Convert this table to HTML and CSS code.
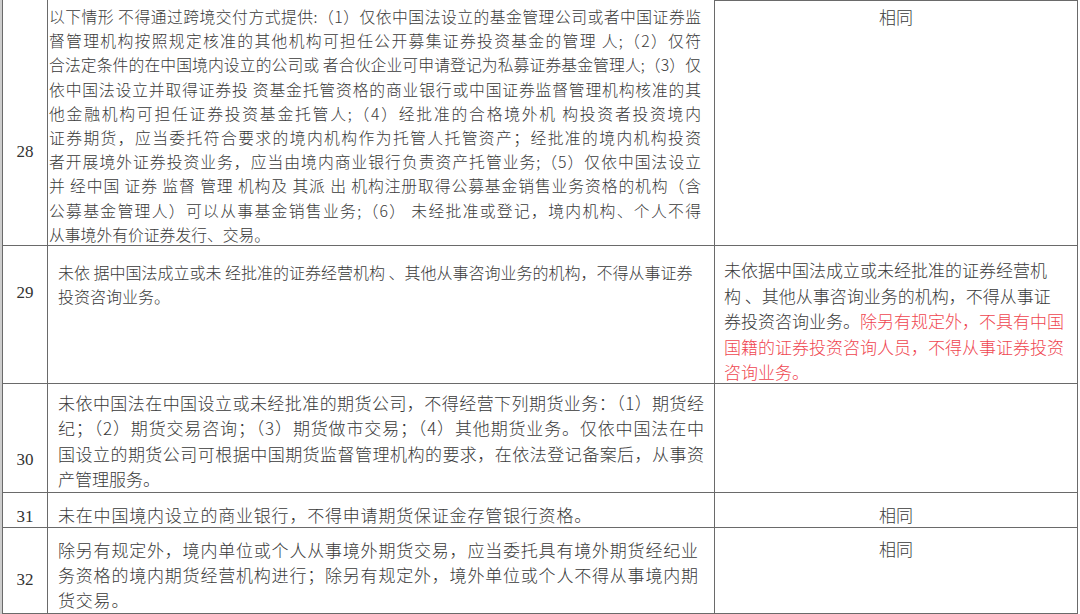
FILE: index.html
```html
<!DOCTYPE html>
<html lang="zh-CN">
<head>
<meta charset="utf-8">
<title>对比表</title>
<link rel="stylesheet" href="styles.css">
</head>
<body>
<div class="page">
  <div class="grid">
    <!-- 28 -->
    <div class="cell num n28">28</div>
    <div class="cell body r28">
      <span class="ln">以下情形 不得通过跨境交付方式提供:（1）仅依中国法设立的基金管理公司或者中国证券监</span>
      <span class="ln">督管理机构按照规定核准的其他机构可担任公开募集证券投资基金的管理 人;（2）仅符</span>
      <span class="ln">合法定条件的在中国境内设立的公司或 者合伙企业可申请登记为私募证券基金管理人;（3）仅</span>
      <span class="ln">依中国法设立并取得证券投 资基金托管资格的商业银行或中国证券监督管理机构核准的其</span>
      <span class="ln">他金融机构可担任证券投资基金托管人;（4）经批准的合格境外机 构投资者投资境内</span>
      <span class="ln">证券期货，应当委托符合要求的境内机构作为托管人托管资产；经批准的境内机构投资</span>
      <span class="ln">者开展境外证券投资业务，应当由境内商业银行负责资产托管业务;（5）仅依中国法设立</span>
      <span class="ln">并 经中国 证券 监督 管理 机构及 其派 出 机构注册取得公募基金销售业务资格的机构（含</span>
      <span class="ln">公募基金管理人）可以从事基金销售业务;（6） 未经批准或登记，境内机构、个人不得</span>
      <span class="ln end">从事境外有价证券发行、交易。</span>
    </div>
    <div class="cell side first same s28">相同</div>

    <!-- 29 -->
    <div class="cell num n29">29</div>
    <div class="cell body r29">
      <span class="ln">未依 据中国法成立或未 经批准的证券经营机构 、其他从事咨询业务的机构，不得从事证券</span>
      <span class="ln end">投资咨询业务。</span>
    </div>
    <div class="cell side s29">
      <span class="ln end">未依据中国法成立或未经批准的证券经营机</span>
      <span class="ln end">构 、其他从事咨询业务的机构，不得从事证</span>
      <span class="ln end">券投资咨询业务。<span class="red">除另有规定外，不具有中国</span></span>
      <span class="ln end red">国籍的证券投资咨询人员，不得从事证券投资</span>
      <span class="ln end red">咨询业务。</span>
    </div>

    <!-- 30 -->
    <div class="cell num n30">30</div>
    <div class="cell body r30">
      <span class="ln">未依中国法在中国设立或未经批准的期货公司，不得经营下列期货业务：（1）期货经</span>
      <span class="ln">纪；（2）期货交易咨询；（3）期货做市交易；（4）其他期货业务。仅依中国法在中</span>
      <span class="ln">国设立的期货公司可根据中国期货监督管理机构的要求，在依法登记备案后，从事资</span>
      <span class="ln end">产管理服务。</span>
    </div>
    <div class="cell side"></div>

    <!-- 31 -->
    <div class="cell num n31">31</div>
    <div class="cell body r31">
      <span class="ln end">未在中国境内设立的商业银行，不得申请期货保证金存管银行资格。</span>
    </div>
    <div class="cell side same s31">相同</div>

    <!-- 32 -->
    <div class="cell num n32">32</div>
    <div class="cell body r32">
      <span class="ln end">除另有规定外，境内单位或个人从事境外期货交易，应当委托具有境外期货经纪业</span>
      <span class="ln end">务资格的境内期货经营机构进行；除另有规定外，境外单位或个人不得从事境内期</span>
      <span class="ln end">货交易。</span>
    </div>
    <div class="cell side same s32">相同</div>
  </div>
</div>
</body>
</html>
```

FILE: styles.css
```css
* { box-sizing: border-box; }

body {
  margin: 0;
  background: #ffffff;
  font-family: "Noto Sans CJK SC", "Noto Sans", sans-serif;
  font-weight: 300;
  color: #3a3a3a;
}

.page {
  width: 1080px;
  height: 614px;
  overflow: hidden;
  border-left: 2px solid #cdcdcd;
}

.grid {
  display: grid;
  width: 1076px;
  grid-template-columns: 45px 667px 363px;
  grid-template-rows: 246px 138px 109px 35px 86px;
  border-left: 1px solid #6a6a6a;
}

.cell {
  border-right: 1px solid #6a6a6a;
  border-bottom: 1px solid #6a6a6a;
  overflow: hidden;
}

.cell.first { border-top: 1px solid #6a6a6a; }

/* number column */
.num {
  font-family: "Liberation Serif", "Times New Roman", serif;
  font-weight: 400;
  font-size: 17px;
  line-height: 24px;
  text-align: center;
  color: #333;
}
.n28 { padding-top: 140px; }
.n29 { padding-top: 35px; }
.n30 { padding-top: 64px; }
.n31 { padding-top: 12px; }
.n32 { padding-top: 40px; }

/* lines */
.ln {
  display: block;
  white-space: nowrap;
  text-align: justify;
  text-align-last: justify;
}
.ln.end {
  text-align: left;
  text-align-last: left;
}

/* body column */
.r28 {
  padding: 5px 13px 0 1px;
  font-size: 15.8px;
  line-height: 24.2px;
}
.r29 {
  padding: 14px 23px 0 10px;
  font-size: 16px;
  line-height: 24px;
}
.r30 {
  padding: 6px 10px 0 10px;
  font-size: 17px;
  line-height: 25.3px;
}
.r31 {
  padding: 9px 10px 0 10px;
  font-size: 17px;
  line-height: 26px;
  letter-spacing: 0.8px;
}
.r32 {
  padding: 9px 10px 0 10px;
  font-size: 17px;
  line-height: 25px;
  letter-spacing: 0.8px;
}

/* right column */
.side {
  font-size: 17px;
}
.same {
  text-align: center;
  line-height: 24px;
}
.s28 { padding-top: 4px; }
.s31 { padding-top: 10px; }
.s32 { padding-top: 9px; }

.s29 {
  padding: 11px 0 0 9px;
  line-height: 25.5px;
}

.red { color: #ef4650; }
```
